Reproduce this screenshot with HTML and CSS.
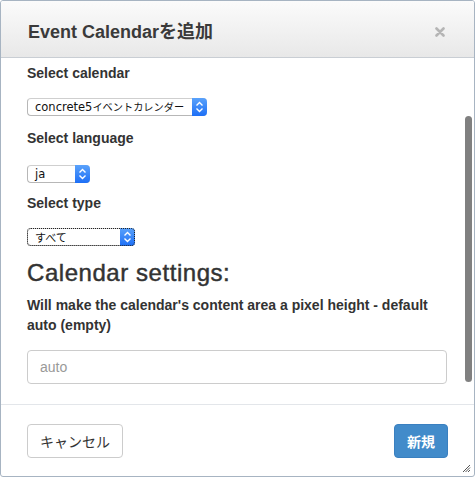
FILE: index.html
```html
<!DOCTYPE html>
<html lang="ja">
<head>
<meta charset="utf-8">
<title>Event Calendarを追加</title>
<link rel="stylesheet" href="styles.css">
</head>
<body>
<div class="dialog">
  <div class="dialog-header">
    <h1 class="dialog-title">Event Calendarを追加</h1>
    <svg class="close" width="10" height="10" viewBox="0 0 10 10"><path d="M1.5 1.5 L8.5 8.5 M8.5 1.5 L1.5 8.5" stroke="#b5b5b5" stroke-width="2.6" stroke-linecap="round"/></svg>
  </div>
  <div class="dialog-body">
    <div class="form-group g1">
      <label class="form-label">Select calendar</label>
      <div class="select select-calendar">
        <span class="select-text">concrete5<span class="cjk">イベントカレンダー</span></span>
        <span class="stepper"><svg width="15" height="18" viewBox="0 0 15 18"><path d="M4.5 7.5 L7.5 4.5 L10.5 7.5 M4.5 10.5 L7.5 13.5 L10.5 10.5" fill="none" stroke="#fff" stroke-width="1.4"/></svg></span>
      </div>
    </div>
    <div class="form-group g2">
      <label class="form-label">Select language</label>
      <div class="select select-lang">
        <span class="select-text">ja</span>
        <span class="stepper"><svg width="15" height="18" viewBox="0 0 15 18"><path d="M4.5 7.5 L7.5 4.5 L10.5 7.5 M4.5 10.5 L7.5 13.5 L10.5 10.5" fill="none" stroke="#fff" stroke-width="1.4"/></svg></span>
      </div>
    </div>
    <div class="form-group g3">
      <label class="form-label">Select type</label>
      <div class="select select-type focused">
        <span class="select-text"><span class="cjk cjk-lg">すべて</span></span>
        <span class="stepper"><svg width="15" height="18" viewBox="0 0 15 18"><path d="M4.5 7.5 L7.5 4.5 L10.5 7.5 M4.5 10.5 L7.5 13.5 L10.5 10.5" fill="none" stroke="#fff" stroke-width="1.4"/></svg></span>
      </div>
    </div>
    <h2 class="section-title">Calendar settings:</h2>
    <p class="help">Will make the calendar's content area a pixel height - default auto (empty)</p>
    <input class="text-input" type="text" placeholder="auto">
    <div class="scrollbar"></div>
  </div>
  <div class="dialog-footer">
    <button class="btn btn-default">キャンセル</button>
    <button class="btn btn-primary">新規</button>
    <svg class="grip" width="9" height="9" viewBox="0 0 9 9"><path d="M1 8 L8 1 M3.5 8 L8 3.5 M6 8 L8 6" stroke="#555" stroke-width="1"/></svg>
  </div>
</div>
</body>
</html>
```
FILE: styles.css
```css
html, body {
  margin: 0;
  padding: 0;
  background: #fff;
}
body {
  font-family: "Liberation Sans", "Noto Sans CJK JP", sans-serif;
  color: #333;
}
.dialog {
  width: 473px;
  height: 475px;
  border: 1px solid #a7b4c2;
  border-radius: 3px;
  background: #fff;
  display: flex;
  flex-direction: column;
  overflow: hidden;
}
.dialog-header {
  height: 56px;
  flex: none;
  display: flex;
  align-items: center;
  justify-content: space-between;
  padding: 0 29px 0 27px;
  background: linear-gradient(#fbfbfb, #e8e8e8);
  border-bottom: 1px solid #c9ced4;
}
.dialog-title {
  margin: 0;
  font-size: 18px;
  font-weight: bold;
  color: #3a3a3a;
  position: relative;
  top: 1px;
}
.close {
  display: block;
  position: relative;
  top: 3px;
}
.dialog-body {
  flex: 1;
  position: relative;
  padding: 5px 26px 0 26px;
  overflow: hidden;
}
.form-label {
  display: block;
  font-size: 14px;
  font-weight: bold;
  line-height: 20px;
  margin-bottom: 15px;
  color: #333;
}
.g1 { margin-bottom: 12px; }
.g2 { margin-bottom: 10px; }
.g2 .form-label { margin-bottom: 17px; }
.g3 { margin-bottom: 0; }
.select {
  display: flex;
  align-items: stretch;
  height: 18px;
  box-sizing: border-box;
  border: 1px solid #b7b7b7;
  border-top-color: #cfcfcf;
  border-right: none;
  border-radius: 4px;
  background: #fff;
  font-family: "DejaVu Sans", "Noto Sans CJK JP", sans-serif;
  font-size: 11.5px;
  color: #111;
}
.select-text {
  flex: 1;
  line-height: 16px;
  padding-left: 7px;
  white-space: nowrap;
  overflow: hidden;
}
.cjk {
  font-family: "Noto Sans CJK JP", sans-serif;
  font-size: 10.2px;
}
.cjk-lg {
  font-size: 11px;
}
.stepper {
  width: 15px;
  flex: none;
  margin: -1px 0;
  border-radius: 0 4px 4px 0;
  background: linear-gradient(#5aa2fb, #1d6ff6);
  display: flex;
}
.select-calendar { width: 180px; }
.select-lang { width: 63px; }
.select-type { width: 108px; }
.focused {
  outline: 1px dotted #222;
  outline-offset: -1px;
}
.section-title {
  margin: 12px 0 0 0;
  font-size: 24px;
  font-weight: normal;
  letter-spacing: 0.55px;
  -webkit-text-stroke: 0.45px #333;
  line-height: 30px;
  color: #333;
}
.help {
  margin: 7px 0 0 0;
  font-size: 14px;
  font-weight: bold;
  line-height: 20px;
  color: #333;
}
.text-input {
  display: block;
  margin-top: 15px;
  width: 420px;
  height: 34px;
  box-sizing: border-box;
  border: 1px solid #ccc;
  border-radius: 4px;
  padding: 0 12px;
  font-family: "Liberation Sans", sans-serif;
  font-size: 14px;
  color: #555;
}
.text-input::placeholder {
  color: #999;
}
.scrollbar {
  position: absolute;
  right: 2px;
  top: 58px;
  width: 7px;
  height: 266px;
  border-radius: 4px;
  background: #808080;
}
.dialog-footer {
  flex: none;
  height: 72px;
  border-top: 1px solid #e3e6ea;
  display: flex;
  align-items: flex-start;
  justify-content: space-between;
  padding: 19px 26px 0 26px;
  box-sizing: border-box;
  position: relative;
}
.btn {
  height: 34px;
  border-radius: 4px;
  font-family: "Noto Sans CJK JP", "Liberation Sans", sans-serif;
  font-size: 14px;
  padding: 0 12px;
  cursor: pointer;
}
.btn-default {
  width: 96px;
  background: #fff;
  border: 1px solid #ccc;
  color: #333;
}
.btn-primary {
  width: 54px;
  background: #428bca;
  border: 1px solid #3a80c0;
  color: #fff;
  font-weight: bold;
}
.grip {
  position: absolute;
  right: 3px;
  bottom: 3px;
}
```
